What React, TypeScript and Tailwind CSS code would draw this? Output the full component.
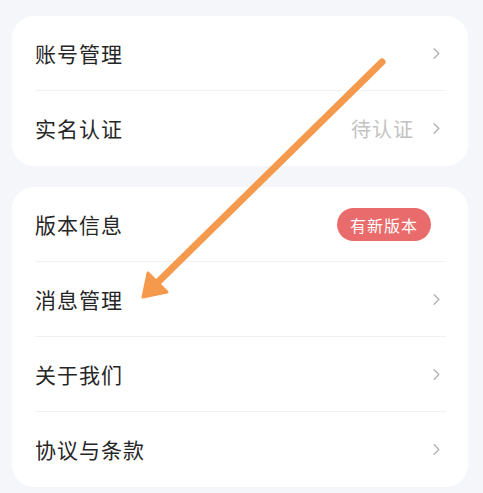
import { ChevronRight } from "lucide-react";

type Row = {
  label: string;
  value?: string;
  badge?: string;
};

const groups: Row[][] = [
  [{ label: "账号管理" }, { label: "实名认证", value: "待认证" }],
  [
    { label: "版本信息", badge: "有新版本" },
    { label: "消息管理" },
    { label: "关于我们" },
    { label: "协议与条款" },
  ],
];

const font = { fontFamily: '"Noto Sans CJK SC", "Noto Sans", sans-serif' };

const SettingRow = ({ row, last }: { row: Row; last: boolean }) => (
  <div className="h-[75px] flex items-center relative">
    <span className="text-[21px] text-[#262626] tracking-[1px]">{row.label}</span>
    <div className="ml-auto flex items-center">
      {row.value && (
        <span className="text-[20px] text-[#c2c2c2] mr-[13px] tracking-[1px]">{row.value}</span>
      )}
      {row.badge ? (
        <span className="h-[33px] w-[94px] mr-[15px] rounded-full bg-[#ea6b6b] text-white text-[16px] flex items-center justify-center tracking-[1px]">
          {row.badge}
        </span>
      ) : (
        <ChevronRight className="w-[19px] h-[19px] text-[#b0b0b0]" strokeWidth={1.6} />
      )}
    </div>
    {!last && <div className="absolute left-0 right-0 bottom-0 h-px bg-[#f0f1f3]" />}
  </div>
);

const App = () => {
  return (
    <div className="w-[483px] h-[493px] bg-[#f4f6f9] pt-4 relative overflow-hidden" style={font}>
      {groups.map((group, i) => (
        <div
          key={i}
          className={`ml-3 w-[456px] bg-white rounded-[22px] pl-[23px] pr-[22px] ${i > 0 ? "mt-[21px]" : ""}`}
        >
          {group.map((row, j) => (
            <SettingRow key={row.label} row={row} last={j === group.length - 1} />
          ))}
        </div>
      ))}

      {/* annotation arrow */}
      <svg className="absolute left-0 top-0 pointer-events-none" width="483" height="493" viewBox="0 0 483 493">
        <line x1="382" y1="62" x2="156" y2="284" stroke="#f5994d" strokeWidth="7" strokeLinecap="round" />
        <polygon points="143,297 148,273 167,292" fill="#f5994d" stroke="#f5994d" strokeWidth="3" strokeLinejoin="round" />
      </svg>
    </div>
  );
};

export default App;
